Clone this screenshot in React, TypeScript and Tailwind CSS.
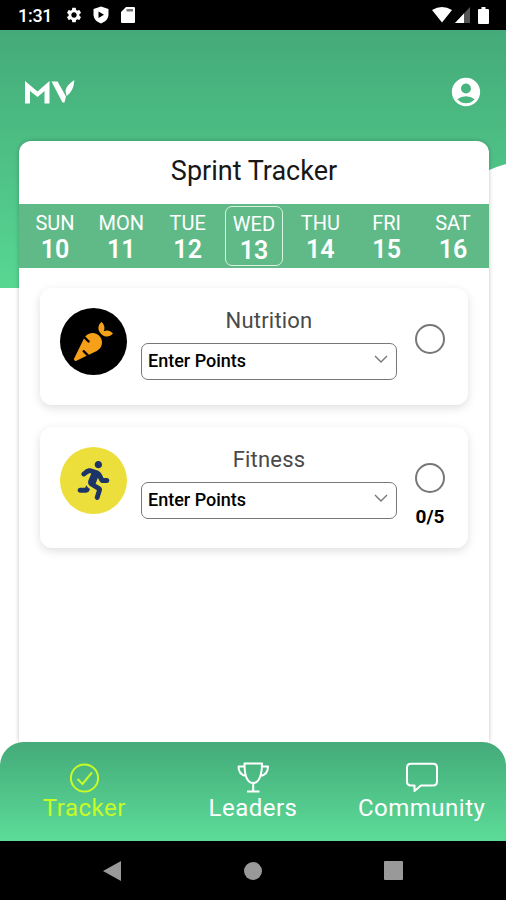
import type { ReactNode } from "react";
import { FaCarrot, FaRunning } from "react-icons/fa";
import { MdAccountCircle, MdSettings } from "react-icons/md";

const DAYS = [
    { name: "SUN", date: 10 },
    { name: "MON", date: 11 },
    { name: "TUE", date: 12 },
    { name: "WED", date: 13 },
    { name: "THU", date: 14 },
    { name: "FRI", date: 15 },
    { name: "SAT", date: 16 },
];

const TODAY = 13;

function StatusBar() {
    return (
        <div className="flex h-[30px] items-center justify-between bg-black pl-[18px] pr-[17px] text-white">
            <div className="flex items-center">
                <span className="w-[47px] pt-[2px] text-[18px] font-medium leading-[28px] tracking-[-0.3px]">1:31</span>
                <MdSettings size={18} />
                <svg className="ml-[10px]" width="16" height="18" viewBox="0 0 16 18" fill="currentColor">
                    <path fillRule="evenodd" d="M8 0.5 15.5 3V8.5C15.5 13 12 16 8 17.5 4 16 0.5 13 0.5 8.5V3ZM5.5 5.5V12L11 8.7Z" />
                </svg>
                <svg className="ml-[12px]" width="14" height="16" viewBox="0 0 14 16">
                    <path d="M5 0H13Q14 0 14 1V15Q14 16 13 16H1Q0 16 0 15V5Z" fill="#fff" />
                    <path d="M5.5 2H12V4.5H5.5Z" fill="#777" />
                </svg>
            </div>
            <div className="flex items-center">
                <svg width="20" height="16" viewBox="0 0 20 16" fill="currentColor">
                    <path d="M0 3Q10-3 20 3L10 15.5Z" />
                </svg>
                <svg className="ml-[3px]" width="15" height="16" viewBox="0 0 15 16">
                    <path d="M15 0V16H0Z" fill="#555" />
                    <path d="M9 6.4V16H0Z" fill="#fff" />
                </svg>
                <svg className="ml-[8px]" width="11" height="17" viewBox="0 0 11 17" fill="currentColor">
                    <path d="M3.5 0H7.5V2H10Q11 2 11 3V16Q11 17 10 17H1Q0 17 0 16V3Q0 2 1 2H3.5Z" />
                </svg>
            </div>
        </div>
    );
}

function Logo() {
    return (
        <svg width="50" height="24" viewBox="0 0 50 24" fill="#fff">
            <path d="M0 1 12.5 11.5 24.5 1V23.5H19.5V11L12.5 17 5 11V23.5H0Z" />
            <path d="M26.5 1.5H32.5L41 16.5 39.5 22.5H37.5Z" />
            <path d="M49.3 0C44 3.5 41 7 40.5 11L41.5 16C46 12.5 49 8 49.3 0Z" />
        </svg>
    );
}

function WeekStrip() {
    return (
        <div className="flex h-[64px] items-center justify-between bg-[#5fba88] pl-[7px] pr-[7px] text-white">
            {DAYS.map((day) => (
                <div
                    key={day.name}
                    className={
                        day.date === TODAY
                            ? "flex h-[60px] w-[58px] flex-col items-center rounded-[7px] border-[1.5px] border-[#d9f2e2] pt-[5px]"
                            : "flex h-[60px] w-[58px] flex-col items-center pt-[5px]"
                    }
                >
                    <span className="text-[20px] leading-[24px]">{day.name}</span>
                    <span className="text-[25px] font-semibold leading-[29px]">{day.date}</span>
                </div>
            ))}
        </div>
    );
}

type ActivityCardProps = {
    title: string;
    icon: ReactNode;
    badge: string;
    height: string;
    score?: string;
};

function ActivityCard({ title, icon, badge, height, score }: ActivityCardProps) {
    return (
        <div className={`flex rounded-[12px] bg-white px-[20px] pt-[20px] shadow-[0_3px_10px_rgba(0,0,0,0.13)] ${height}`}>
            <div className={`flex size-[67px] shrink-0 items-center justify-center rounded-full ${badge}`}>{icon}</div>
            <div className="ml-[14px] w-[256px]">
                <h2 className="pt-px text-center text-[22px] leading-[24px] tracking-[0.2px] text-[#494949]">{title}</h2>
                <button className="mt-[10px] flex h-[37px] w-full items-center justify-between rounded-[7px] border-[1.5px] border-[#777] pl-[6px] pr-[8px]">
                    <span className="pb-[2px] text-[18px] font-medium text-black">Enter Points</span>
                    <svg className="mb-[5px]" width="14" height="8" viewBox="0 0 14 8" fill="none" stroke="#777" strokeWidth="1.4">
                        <path d="M1 1 7 7 13 1" />
                    </svg>
                </button>
            </div>
            <div className="ml-[17px] flex w-[32px] flex-col items-center pt-[16px]">
                <span className="size-[30px] rounded-full border-2 border-[#777]" />
                {score && <span className="mt-[12px] text-[19px] font-bold leading-[24px] text-black">{score}</span>}
            </div>
        </div>
    );
}

function TabBar() {
    return (
        <nav className="relative flex h-[99px] rounded-t-[24px] bg-linear-to-b from-[#44aa79] to-[#5cdc98] pt-[19px] text-[24px] leading-[30px] tracking-[0.5px] text-white">
            <a className="flex w-[169px] flex-col items-center text-[#c8fb26]">
                <svg width="32" height="32" viewBox="0 0 32 32" fill="none" stroke="currentColor" strokeWidth="2">
                    <circle cx="16.5" cy="17" r="13.6" />
                    <path d="M9.5 18 14.5 23 24 11.5" />
                </svg>
                Tracker
            </a>
            <a className="flex w-[169px] flex-col items-center">
                <svg width="32" height="32" viewBox="0 0 32 32" fill="none" stroke="currentColor" strokeWidth="2" strokeLinejoin="round">
                    <path d="M7.5 2.5H25C25 14 22 22 16.2 22S7.5 14 7.5 2.5ZM7.5 5.5H1.5C1.5 10 4 14 9 15M25 5.5H31C31 10 28.5 14 23.5 15M16.2 22V30.5M10 30.5H22.5" />
                </svg>
                Leaders
            </a>
            <a className="flex w-[169px] flex-col items-center">
                <svg width="34" height="32" viewBox="0 0 34 32" fill="none" stroke="currentColor" strokeWidth="2" strokeLinejoin="round">
                    <path d="M6 2.8H28Q32 2.8 32 6.8V20.5Q32 24.5 28 24.5H16L9.5 30V24.5H6Q2 24.5 2 20.5V6.8Q2 2.8 6 2.8Z" />
                </svg>
                Community
            </a>
        </nav>
    );
}

function SystemNav() {
    return (
        <div className="flex h-[59px] items-center justify-between bg-black pl-[103px] pr-[103px]">
            <svg width="19" height="20" viewBox="0 0 19 20" fill="#999">
                <path d="M18 0V20L0 10Z" />
            </svg>
            <span className="size-[18px] rounded-full bg-[#999]" />
            <span className="size-[19px] rounded-[1px] bg-[#999]" />
        </div>
    );
}

export default function App() {
    return (
        <div className="relative isolate flex h-[900px] w-[506px] flex-col overflow-hidden bg-white font-[Roboto,sans-serif]">
            {/* Curved backdrop */}
            <svg className="absolute left-0 top-[30px] -z-10" width="506" height="258" viewBox="0 0 506 258">
                <defs>
                    <linearGradient id="backdrop" x1="0" y1="0" x2="0" y2="1">
                        <stop offset="0" stopColor="#44aa79" />
                        <stop offset="1" stopColor="#58d792" />
                    </linearGradient>
                </defs>
                <path d="M0 0H506V134Q488 139 470 150C350 210 230 258 100 258H0Z" fill="url(#backdrop)" />
            </svg>

            <StatusBar />

            <header className="flex h-[111px] items-center justify-between pl-[25px] pr-[23px] pb-[12px] pt-[24px]">
                <Logo />
                <MdAccountCircle size={34} color="#fff" />
            </header>

            <main className="ml-[19px] flex w-[470px] grow flex-col rounded-t-[12px] bg-white shadow-[0_0_4px_rgba(0,0,0,0.25)]">
                <h1 className="h-[63px] text-center text-[27px] leading-[61px] text-[#171717]">Sprint Tracker</h1>
                <WeekStrip />
                <div className="flex flex-col gap-[22px] px-[21px] pt-[20px]">
                    <ActivityCard
                        title="Nutrition"
                        icon={<FaCarrot size={39} color="#f6a01a" />}
                        badge="bg-black"
                        height="h-[117px]"
                    />
                    <ActivityCard
                        title="Fitness"
                        icon={<FaRunning size={39} color="#1c3468" />}
                        badge="bg-[#ecdf3c]"
                        height="h-[121px]"
                        score="0/5"
                    />
                </div>
            </main>

            <TabBar />
            <SystemNav />
        </div>
    );
}
